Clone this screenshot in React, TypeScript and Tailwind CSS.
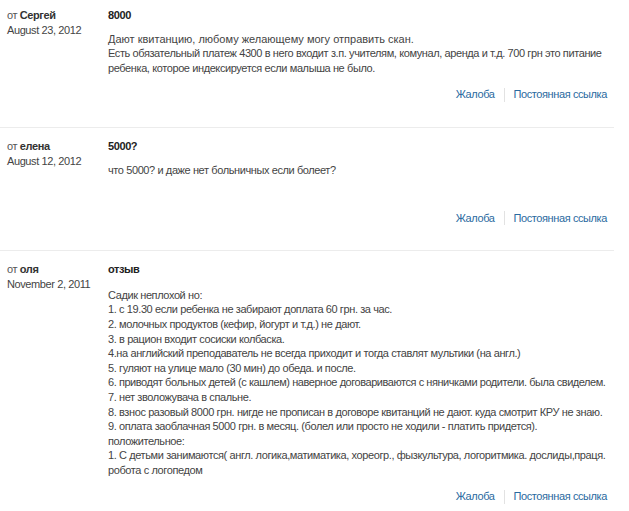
import React from 'react';

type Line = { text: string; cls?: string };

type Comment = {
  author: string;
  date: string;
  title: string;
  lines: Line[];
  bodyCls?: string;
};

const comments: Comment[] = [
  {
    author: 'Сергей',
    date: 'August 23, 2012',
    title: '8000',
    lines: [
      { text: 'Дают квитанцию, любому желающему могу отправить скан.', cls: 'tracking-[0px]' },
      { text: 'Есть обязательный платеж 4300 в него входит з.п. учителям, комунал, аренда и т.д. 700 грн это питание' },
      { text: 'ребенка, которое индексируется если малыша не было.' },
    ],
  },
  {
    author: 'елена',
    date: 'August 12, 2012',
    title: '5000?',
    lines: [{ text: 'что 5000? и даже нет больничных если болеет?' }],
    bodyCls: 'min-h-[36px]',
  },
  {
    author: 'оля',
    date: 'November 2, 2011',
    title: 'отзыв',
    bodyCls: 'pt-[2px]',
    lines: [
      { text: 'Садик неплохой но:' },
      { text: '1. с 19.30 если ребенка не забирают доплата 60 грн. за час.' },
      { text: '2. молочных продуктов (кефир, йогурт и т.д.) не дают.' },
      { text: '3. в рацион входит сосиски колбаска.' },
      { text: '4.на английский преподаватель не всегда приходит и тогда ставлят мультики (на англ.)' },
      { text: '5. гуляют на улице мало (30 мин) до обеда. и после.' },
      {
        text: '6. приводят больных детей (с кашлем) наверное договариваются с няничками родители. была свиделем.',
        cls: 'tracking-[-0.45px]',
      },
      { text: '7. нет зволожувача в спальне.' },
      { text: '8. взнос разовый 8000 грн. нигде не прописан в договоре квитанций не дают. куда смотрит КРУ не знаю.' },
      { text: '9. оплата заоблачная 5000 грн. в месяц. (болел или просто не ходили - платить придется).' },
      { text: 'положительное:' },
      { text: '1. С детьми занимаются( англ. логика,матиматика, хореогр., фызкультура, логоритмика. дослиды,праця.' },
      { text: 'робота с логопедом' },
    ],
  },
];

const CommentItem: React.FC<{ c: Comment; first: boolean }> = ({ c, first }) => (
  <div className={`flex border-b border-[#ececec] pb-[25px] ${first ? 'pt-[8px]' : 'pt-[11px]'}`}>
    {/* meta */}
    <div className="w-[108px] shrink-0 pl-[7px]">
      <div>
        <span className="text-[#555]">от</span>{' '}
        <span className="font-bold text-[#333]">{c.author}</span>
      </div>
      <div className="text-[#444]">{c.date}</div>
    </div>

    {/* body */}
    <div className="min-w-0 flex-1 pr-[7px]">
      <div className="font-bold text-[#222]">{c.title}</div>
      <div className={`mt-[9px] text-[#444] ${c.bodyCls ?? ''}`}>
        {c.lines.map((l, i) => (
          <div key={i} className={`whitespace-nowrap ${l.cls ?? ''}`}>
            {l.text}
          </div>
        ))}
      </div>
      <div className="mt-[12px] flex items-center justify-end text-[#2a6aa0]">
        <a href="#" className="hover:underline">Жалоба</a>
        <span className="mx-[9px] h-[14px] w-px bg-[#e2e2e2]" />
        <a href="#" className="hover:underline">Постоянная ссылка</a>
      </div>
    </div>
  </div>
);

export default function App() {
  return (
    <div className="min-h-screen bg-white">
      <div className="w-[614px] text-[11px] leading-[14.6px] tracking-[-0.4px] font-[family-name:'Liberation_Sans',Arial,sans-serif]">
        {comments.map((c, i) => (
          <CommentItem key={i} c={c} first={i === 0} />
        ))}
      </div>
    </div>
  );
}
